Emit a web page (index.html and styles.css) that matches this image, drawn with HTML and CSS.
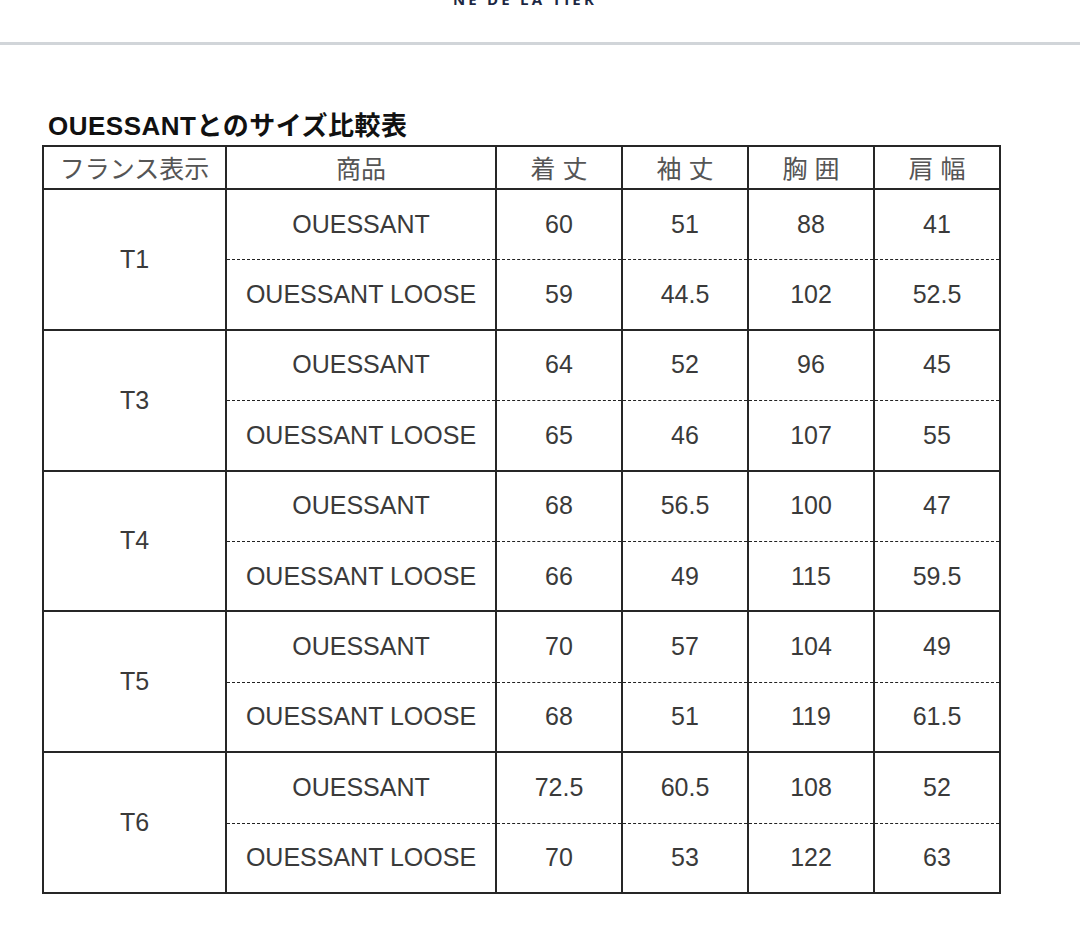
FILE: index.html
```html
<!DOCTYPE html>
<html lang="ja">
<head>
<meta charset="utf-8">
<link rel="stylesheet" href="styles.css">
</head>
<body>
<header class="site-header">
  <div class="logo">NE DE LA TIER</div>
</header>
<main class="content">
  <h2 class="title">OUESSANTとのサイズ比較表</h2>
  <table class="size-table">
    <colgroup>
      <col class="c1"><col class="c2"><col class="c3"><col class="c3"><col class="c3"><col class="c3">
    </colgroup>
    <thead>
      <tr><th>フランス表示</th><th>商品</th><th>着 丈</th><th>袖 丈</th><th>胸 囲</th><th>肩 幅</th></tr>
    </thead>
    <tbody>
      <tr class="a"><td class="size" rowspan="2">T1</td><td>OUESSANT</td><td>60</td><td>51</td><td>88</td><td>41</td></tr>
      <tr class="b"><td>OUESSANT LOOSE</td><td>59</td><td>44.5</td><td>102</td><td>52.5</td></tr>
      <tr class="a"><td class="size" rowspan="2">T3</td><td>OUESSANT</td><td>64</td><td>52</td><td>96</td><td>45</td></tr>
      <tr class="b"><td>OUESSANT LOOSE</td><td>65</td><td>46</td><td>107</td><td>55</td></tr>
      <tr class="a"><td class="size" rowspan="2">T4</td><td>OUESSANT</td><td>68</td><td>56.5</td><td>100</td><td>47</td></tr>
      <tr class="b"><td>OUESSANT LOOSE</td><td>66</td><td>49</td><td>115</td><td>59.5</td></tr>
      <tr class="a"><td class="size" rowspan="2">T5</td><td>OUESSANT</td><td>70</td><td>57</td><td>104</td><td>49</td></tr>
      <tr class="b"><td>OUESSANT LOOSE</td><td>68</td><td>51</td><td>119</td><td>61.5</td></tr>
      <tr class="a"><td class="size" rowspan="2">T6</td><td>OUESSANT</td><td>72.5</td><td>60.5</td><td>108</td><td>52</td></tr>
      <tr class="b"><td>OUESSANT LOOSE</td><td>70</td><td>53</td><td>122</td><td>63</td></tr>
    </tbody>
  </table>
</main>
</body>
</html>
```

FILE: styles.css
```css
html, body {
  margin: 0;
  padding: 0;
  background: #ffffff;
}
body {
  font-family: "Liberation Sans", "Noto Sans CJK JP", sans-serif;
  color: #333;
}
.site-header {
  height: 42px;
  border-bottom: 3px solid #d1d5d9;
  display: flex;
  justify-content: center;
  overflow: hidden;
}
.logo {
  margin-top: -8px;
  margin-right: 30px;
  font-family: "Open Sans", "Noto Sans", sans-serif;
  font-weight: 700;
  font-size: 15px;
  line-height: 15px;
  letter-spacing: 3.2px;
  color: #1c2743;
}
.content {
  padding: 66px 0 0 42px;
}
.title {
  margin: 0 0 4px 6px;
  font-family: "Liberation Sans", "Noto Sans CJK JP", sans-serif;
  font-weight: 700;
  font-size: 26px;
  line-height: 30px;
  letter-spacing: 0.5px;
  color: #111;
}
.size-table {
  border-collapse: collapse;
  table-layout: fixed;
  width: 958px;
}
.c1 { width: 183px; }
.c2 { width: 270px; }
.c3 { width: 126px; }
.size-table th,
.size-table td {
  border: 2px solid #262626;
  text-align: center;
  padding: 0;
  font-weight: 400;
  font-size: 25px;
  color: #3a3a3a;
}
.size-table th {
  height: 39px;
  padding-bottom: 2px;
  font-family: "Liberation Sans", "Noto Sans CJK JP", sans-serif;
  font-weight: 400;
  font-size: 25px;
  color: #555;
}
.size-table td {
  height: 68.4px;
}
.size-table tr.a td {
  border-bottom: 1px dashed #222;
  padding-bottom: 1px;
}
.size-table tr.a td.size {
  border-bottom: 2px solid #262626;
  padding-bottom: 0;
}
.size-table tr.b td {
  border-top: 1px dashed #222;
}
```
